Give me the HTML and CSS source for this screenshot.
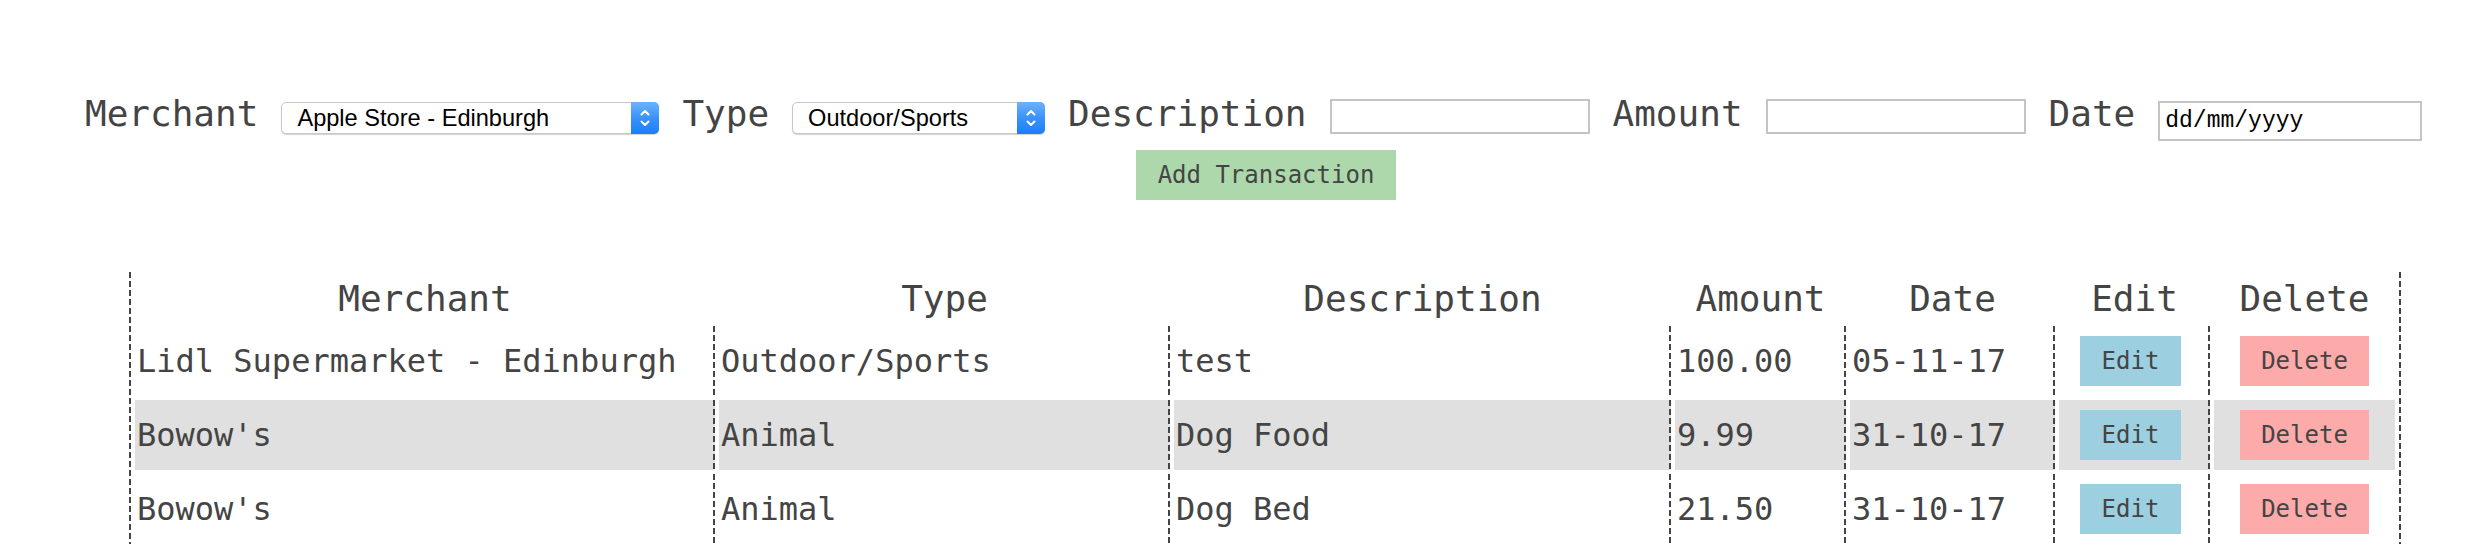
FILE: index.html
```html
<!DOCTYPE html>
<html lang="en">
<head>
<meta charset="utf-8">
<title>Transactions</title>
<link rel="stylesheet" href="styles.css">
</head>
<body>
<form class="txn-form">
  <div class="form-row">
    <label class="lbl" for="merchant">Merchant</label>
    <div class="select select-merchant">
      <select id="merchant" class="select-input"><option>Apple Store - Edinburgh</option></select>
      <span class="select-arrow"><svg width="28" height="32" viewBox="0 0 28 32"><polyline points="10.5,12.5 14,9 17.5,12.5" fill="none" stroke="#fff" stroke-width="2" stroke-linecap="round" stroke-linejoin="round"/><polyline points="10.5,19.5 14,23 17.5,19.5" fill="none" stroke="#fff" stroke-width="2" stroke-linecap="round" stroke-linejoin="round"/></svg></span>
    </div>
    <label class="lbl" for="type">Type</label>
    <div class="select select-type">
      <select id="type" class="select-input"><option>Outdoor/Sports</option></select>
      <span class="select-arrow"><svg width="28" height="32" viewBox="0 0 28 32"><polyline points="10.5,12.5 14,9 17.5,12.5" fill="none" stroke="#fff" stroke-width="2" stroke-linecap="round" stroke-linejoin="round"/><polyline points="10.5,19.5 14,23 17.5,19.5" fill="none" stroke="#fff" stroke-width="2" stroke-linecap="round" stroke-linejoin="round"/></svg></span>
    </div>
    <label class="lbl" for="description">Description</label>
    <input id="description" class="text-input" type="text">
    <label class="lbl" for="amount">Amount</label>
    <input id="amount" class="text-input" type="text">
    <label class="lbl" for="date">Date</label>
    <input id="date" class="date-input" type="text" placeholder="dd/mm/yyyy">
  </div>
  <div class="form-actions">
    <button type="button" class="btn btn-add">Add Transaction</button>
  </div>
</form>

<table class="txn-table">
  <thead>
    <tr>
      <th class="col-merchant">Merchant</th>
      <th class="col-type">Type</th>
      <th class="col-desc">Description</th>
      <th class="col-amount">Amount</th>
      <th class="col-date">Date</th>
      <th class="col-edit">Edit</th>
      <th class="col-delete">Delete</th>
    </tr>
  </thead>
  <tbody>
    <tr>
      <td>Lidl Supermarket - Edinburgh</td>
      <td>Outdoor/Sports</td>
      <td>test</td>
      <td>100.00</td>
      <td>05-11-17</td>
      <td class="action action-edit"><button type="button" class="btn btn-edit">Edit</button></td>
      <td class="action"><button type="button" class="btn btn-delete">Delete</button></td>
    </tr>
    <tr>
      <td>Bowow's</td>
      <td>Animal</td>
      <td>Dog Food</td>
      <td>9.99</td>
      <td>31-10-17</td>
      <td class="action action-edit"><button type="button" class="btn btn-edit">Edit</button></td>
      <td class="action"><button type="button" class="btn btn-delete">Delete</button></td>
    </tr>
    <tr>
      <td>Bowow's</td>
      <td>Animal</td>
      <td>Dog Bed</td>
      <td>21.50</td>
      <td>31-10-17</td>
      <td class="action action-edit"><button type="button" class="btn btn-edit">Edit</button></td>
      <td class="action"><button type="button" class="btn btn-delete">Delete</button></td>
    </tr>
  </tbody>
</table>
</body>
</html>
```

FILE: styles.css
```css
* {
  box-sizing: border-box;
}

html, body {
  margin: 0;
  padding: 0;
  background: #ffffff;
}

body {
  color: #444444;
  font-family: "DejaVu Sans Mono", "Liberation Mono", monospace;
  overflow: hidden;
}

.txn-form {
  margin: 0;
}

.form-row {
  display: flex;
  align-items: flex-start;
  gap: 23px;
  padding: 93px 0 0 85px;
}

.lbl {
  font-size: 36px;
  line-height: 42px;
  white-space: nowrap;
}

.select {
  position: relative;
  height: 32px;
  margin-top: 9px;
  flex: none;
}

.select-merchant {
  width: 378px;
}

.select-type {
  width: 253px;
}

.select-input {
  -webkit-appearance: none;
  appearance: none;
  display: block;
  width: 100%;
  height: 32px;
  margin: 0;
  padding: 0 0 0 15px;
  border: 1px solid #c9c9c9;
  border-radius: 5px;
  background: #ffffff;
  box-shadow: 0 1px 1px rgba(0, 0, 0, 0.18);
  color: #000000;
  font-family: "Liberation Sans", Arial, sans-serif;
  font-size: 23.6px;
  line-height: 30px;
}

.select-arrow {
  position: absolute;
  top: 0;
  right: 0;
  width: 28px;
  height: 32px;
  border-radius: 0 5px 5px 0;
  background: linear-gradient(to bottom, #6db3fb 0%, #3a92fa 50%, #1b7ef8 100%);
  pointer-events: none;
}

.select-arrow svg {
  display: block;
}

.text-input,
.date-input {
  flex: none;
  margin: 6px 0 0 0;
  padding: 0 6px;
  border: 2px solid #c4c4c4;
  border-radius: 0;
  background: #ffffff;
  outline: none;
}

.text-input {
  width: 260px;
  height: 35px;
}

.date-input {
  width: 264px;
  height: 40px;
  margin-top: 8px;
  padding-left: 5px;
  font-family: "Liberation Mono", "Courier New", monospace;
  font-size: 23px;
  color: #000000;
}

.date-input::placeholder {
  color: #000000;
  opacity: 1;
}

.form-actions {
  display: flex;
  justify-content: center;
  padding-left: 40px;
  margin-top: 9px;
}

.btn {
  display: inline-flex;
  align-items: center;
  justify-content: center;
  height: 50px;
  margin: 0;
  padding: 0 21.5px;
  border: none;
  border-radius: 0;
  color: #444444;
  font-family: "DejaVu Sans Mono", "Liberation Mono", monospace;
  font-size: 24px;
  line-height: 28px;
}

.btn-add {
  background: #acd8ac;
}

.btn-edit {
  background: #9ccfe0;
  vertical-align: middle;
}

.btn-delete {
  background: #fdaaaa;
  vertical-align: middle;
}

.txn-table {
  margin: 72px 0 0 129px;
  width: 2272px;
  table-layout: fixed;
  border-collapse: separate;
  border-spacing: 4px;
  border-left: 2px solid transparent;
  border-right: 2px solid transparent;
  background-image:
    repeating-linear-gradient(to bottom, #444444 0, #444444 6px, transparent 6px, transparent 9px),
    repeating-linear-gradient(to bottom, #444444 0, #444444 6px, transparent 6px, transparent 9px);
  background-size: 2px 100%, 2px 100%;
  background-position: left top, right top;
  background-repeat: no-repeat;
  background-origin: border-box;
  background-clip: border-box;
}

.txn-table th {
  height: 46px;
  padding: 0 2px;
  font-size: 36px;
  line-height: 42px;
  font-weight: normal;
  text-align: center;
  vertical-align: middle;
  white-space: nowrap;
}

.col-merchant { width: 580px; }
.col-type { width: 451px; }
.col-desc { width: 497px; }
.col-amount { width: 171px; }
.col-date { width: 205px; }
.col-edit { width: 151px; }
.col-delete { width: 181px; }

.txn-table td {
  height: 70px;
  padding: 0 2px;
  font-size: 32px;
  line-height: 37px;
  vertical-align: middle;
  white-space: nowrap;
  border-right: 2px solid transparent;
  background-image: repeating-linear-gradient(to bottom, #444444 0, #444444 6px, transparent 6px, transparent 9px);
  background-size: 2px 100%;
  background-position: right top;
  background-repeat: no-repeat;
  background-origin: border-box;
  background-clip: border-box;
}

.txn-table td:last-child {
  border-right: none;
  background-image: none;
}

.txn-table td.action {
  text-align: center;
}

.txn-table td.action-edit {
  padding-right: 8px;
}

.txn-table tbody tr:nth-child(even) td {
  background-color: #e0e0e0;
}
```
